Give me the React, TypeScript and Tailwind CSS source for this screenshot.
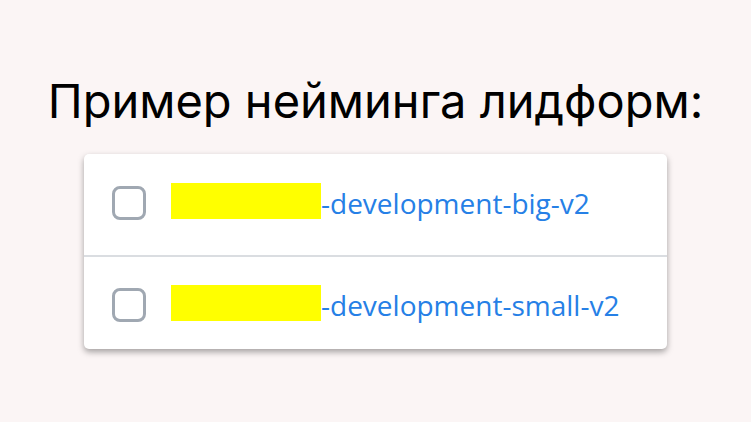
const forms = [
  { id: "big", label: "-development-big-v2" },
  { id: "small", label: "-development-small-v2" },
];

export default function App() {
  return (
    <main className="flex min-h-screen flex-col items-center bg-[#fbf5f5] pt-[73px] pb-8">
      <h1 className="text-center font-['Inter',sans-serif] text-[47px] leading-[56px] font-[380] whitespace-nowrap text-black">
        Пример нейминга лидформ:
      </h1>
      <ul className="mt-[25px] w-full max-w-[583px] overflow-hidden rounded-[5px] bg-white shadow-[0_3px_6px_rgba(0,0,0,0.35)]">
        {forms.map((form) => (
          <li
            key={form.id}
            className="flex h-[101px] items-center border-[#dadde1] pl-7 first:pb-2 not-first:h-[94px] not-first:border-t-2"
          >
            <input
              id={form.id}
              type="checkbox"
              aria-label={form.label}
              className="mt-1 size-[34px] shrink-0 appearance-none rounded-[8px] border-[3px] border-[#a0a8b2] bg-white checked:bg-[#2d88ed]"
            />
            <span className="ml-[25px] h-9 w-[150px] shrink-0 bg-[#ffff00]" />
            <a href={`#${form.id}`} className="pt-1 font-['Open_Sans',sans-serif] text-[28px] leading-9 whitespace-nowrap text-[#2680e6]">
              {form.label}
            </a>
          </li>
        ))}
      </ul>
    </main>
  );
}
